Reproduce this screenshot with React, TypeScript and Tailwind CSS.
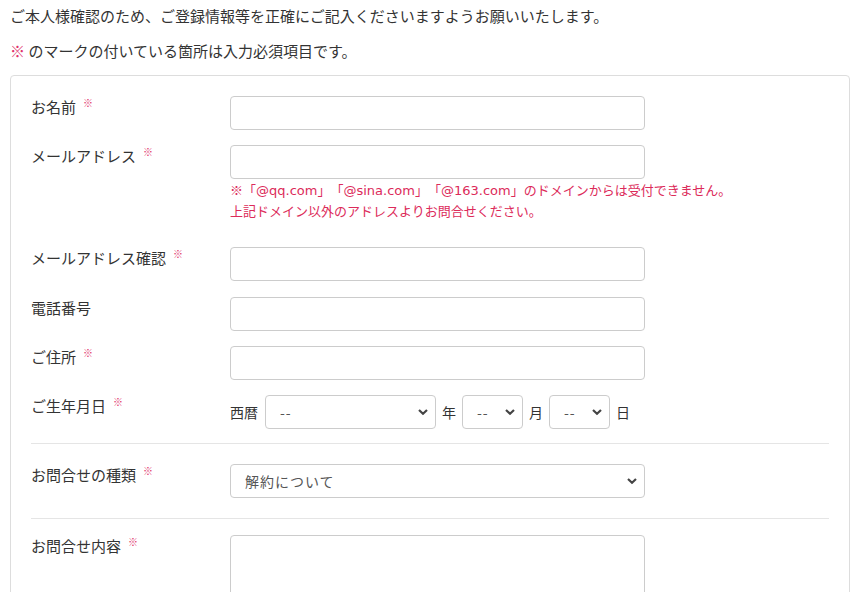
import React from 'react'

const font = { fontFamily: '"Noto Sans CJK JP", "Noto Sans", sans-serif' }

function Req() {
  return <span className="ml-[7px] self-start text-[10px] leading-[14px] text-[#e0326b]">※</span>
}

function Label({ text, required }: { text: string; required?: boolean }) {
  return (
    <div className="flex w-[199px] shrink-0 items-start text-[15px] leading-[22px] text-[#333]">
      <span>{text}</span>
      {required && <Req />}
    </div>
  )
}

function Chevron() {
  return (
    <svg className="pointer-events-none absolute right-[8px] top-1/2 -translate-y-1/2" width="10" height="7" viewBox="0 0 10 7">
      <path d="M1 1.5 L5 5.2 L9 1.5" fill="none" stroke="#444" strokeWidth="2.2" />
    </svg>
  )
}

function Select({ value, className }: { value: string; className: string }) {
  return (
    <div className={`relative h-[34px] ${className}`}>
      <select
        defaultValue={value}
        className="h-full w-full appearance-none rounded-[4px] border border-[#ccc] bg-white pl-[14px] pr-[24px] text-[14px] tracking-[1px] text-[#555] outline-none"
      >
        <option>{value}</option>
      </select>
      <Chevron />
    </div>
  )
}

function TextInput() {
  return <input className="h-[34px] w-[415px] rounded-[4px] border border-[#ccc] bg-white outline-none" />
}

// latin bits of the note are set in a wider face, like the original
function Latin({ children }: { children: React.ReactNode }) {
  return <span style={{ fontFamily: '"DejaVu Sans", sans-serif' }} className="text-[13px]">{children}</span>
}

export default function App() {
  return (
    <div className="min-h-screen bg-white pl-[10px] pt-[5px]" style={font}>
      <p className="text-[15px] leading-[22px] text-[#333]">
        ご本人様確認のため、ご登録情報等を正確にご記入くださいますようお願いいたします。
      </p>
      <p className="mt-[13px] text-[15px] leading-[22px] text-[#333]">
        <span className="text-[#e0326b]">※</span> のマークの付いている箇所は入力必須項目です。
      </p>

      <div className="mt-[13px] w-[840px] rounded-[4px] border border-[#ddd] px-[20px] pt-[20px]">
        <div className="flex flex-col">
          <div className="mb-[15px] flex">
            <Label text="お名前" required />
            <TextInput />
          </div>

          <div className="mb-[26px] flex">
            <Label text="メールアドレス" required />
            <div className="flex flex-col">
              <TextInput />
              <div className="mt-[1px] text-[13px] leading-[20px] text-[#dc2b5a] [text-spacing-trim:space-all]">
                <p>
                  ※「<Latin>@qq.com</Latin>」「<Latin>@sina.com</Latin>」「<Latin>@163.com</Latin>」のドメインからは受付できません。
                </p>
                <p>上記ドメイン以外のアドレスよりお問合せください。</p>
              </div>
            </div>
          </div>

          <div className="mb-[16px] flex">
            <Label text="メールアドレス確認" required />
            <TextInput />
          </div>

          <div className="mb-[15px] flex">
            <Label text="電話番号" />
            <TextInput />
          </div>

          <div className="mb-[15px] flex">
            <Label text="ご住所" required />
            <TextInput />
          </div>

          <div className="flex">
            <Label text="ご生年月日" required />
            <div className="flex items-center gap-[6px] text-[14px] text-[#333]">
              <span className="pr-[1px]">西暦</span>
              <Select value="--" className="w-[171px]" />
              <span>年</span>
              <Select value="--" className="w-[61px]" />
              <span>月</span>
              <Select value="--" className="w-[61px]" />
              <span>日</span>
            </div>
          </div>

          <div className="mb-[20px] mt-[14px] border-t border-[#e5e5e5]" />

          <div className="flex">
            <Label text="お問合せの種類" required />
            <Select value="解約について" className="w-[415px]" />
          </div>

          <div className="mb-[16px] mt-[20px] border-t border-[#e5e5e5]" />

          <div className="mb-[20px] flex">
            <Label text="お問合せ内容" required />
            <textarea className="h-[120px] w-[415px] resize-none rounded-[4px] border border-[#ccc] bg-white outline-none" />
          </div>
        </div>
      </div>
    </div>
  )
}
